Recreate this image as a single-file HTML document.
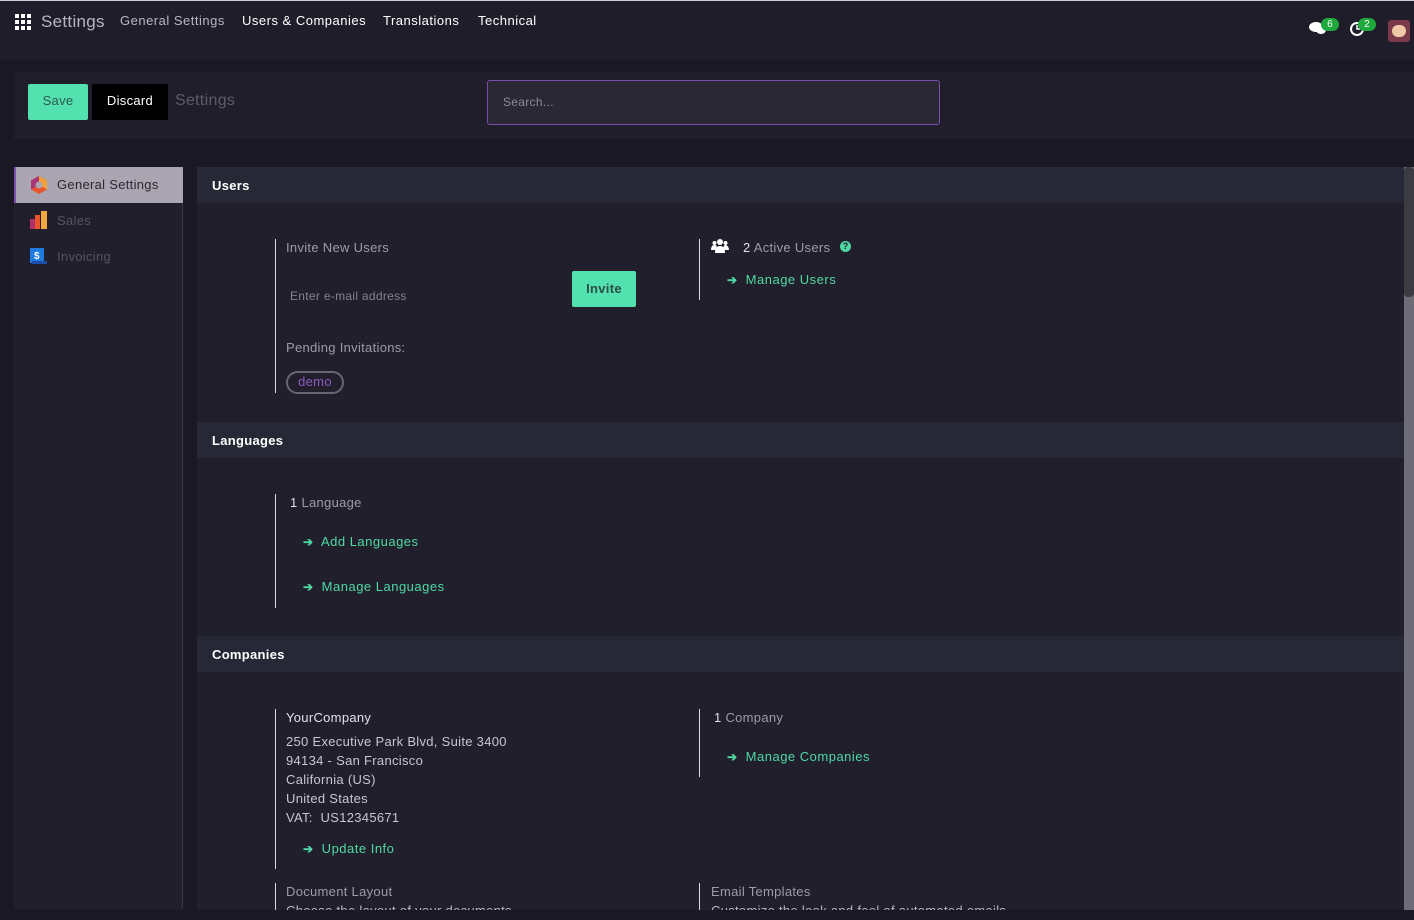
<!DOCTYPE html>
<html><head><meta charset="utf-8"><style>
*{margin:0;padding:0;box-sizing:border-box}
body{width:1414px;height:920px;overflow:hidden;background:#1a1822;font-family:"Liberation Sans",sans-serif;font-size:13px;color:#b8b6c0;position:relative;letter-spacing:0.3px}
.a{position:absolute;white-space:nowrap}
.top{left:0;top:0;width:1414px;height:60px;background:#1e1d29;border-top:1px solid #cfcfcf}
.nav{top:13px;font-size:13px;color:#fff;letter-spacing:0.5px}
.cp{left:14px;top:72px;width:1400px;height:67px;background:#1f1e2a}
.side{left:14px;top:167px;width:169px;height:743px;background:#201f2b;border-right:1px solid #3a3945;border-radius:0 0 4px 4px}
.main{left:197px;top:167px;width:1207px;height:743px;background:#201f2b;overflow:hidden}
.sh{position:absolute;left:0;width:1207px;height:36px;background:#262836;color:#fff;font-weight:bold;font-size:13px;padding:11px 15px}
.vl{position:absolute;width:1px;background:#d8d8d8}
.lk{color:#4fd8a4;font-size:13px;letter-spacing:0.5px}
.lk b{font-size:12px;margin-right:4px}
.g{color:#9d9ba6}
.w{color:#e2e0e8}
</style></head><body>
<div class="a top"></div>
<svg class="a" style="left:15px;top:14px" width="16" height="16"><g fill="#fff"><rect x="0" y="0" width="4" height="4"/><rect x="6" y="0" width="4" height="4"/><rect x="12" y="0" width="4" height="4"/><rect x="0" y="6" width="4" height="4"/><rect x="6" y="6" width="4" height="4"/><rect x="12" y="6" width="4" height="4"/><rect x="0" y="12" width="4" height="4"/><rect x="6" y="12" width="4" height="4"/><rect x="12" y="12" width="4" height="4"/></g></svg>
<div class="a" style="left:41px;top:12px;font-size:17px;color:#b8b6c0">Settings</div>
<div class="a nav" style="left:120px;color:#b8b6c0">General Settings</div>
<div class="a nav" style="left:242px">Users &amp; Companies</div>
<div class="a nav" style="left:383px">Translations</div>
<div class="a nav" style="left:478px">Technical</div>
<svg class="a" style="left:1309px;top:21px" width="18" height="14"><ellipse cx="7" cy="6" rx="7" ry="5" fill="#fff"/><ellipse cx="12" cy="9" rx="5" ry="4" fill="#fff"/></svg>
<div class="a" style="left:1321px;top:18px;width:18px;height:13px;border-radius:7px;background:#1fa83c;color:#fff;font-size:10px;text-align:center;line-height:13px">6</div>
<svg class="a" style="left:1349px;top:21px" width="16" height="16"><circle cx="8" cy="8" r="6" fill="none" stroke="#fff" stroke-width="2"/><path d="M8 4v4h3" stroke="#fff" stroke-width="1.5" fill="none"/></svg>
<div class="a" style="left:1358px;top:18px;width:18px;height:13px;border-radius:7px;background:#1fa83c;color:#fff;font-size:10px;text-align:center;line-height:13px">2</div>
<div class="a" style="left:1388px;top:20px;width:22px;height:22px;border-radius:3px;background:#7a3a4a"><div style="margin:5px 4px;width:14px;height:12px;background:#f1c9a8;border-radius:6px"></div></div>

<div class="a cp"></div>
<div class="a" style="left:28px;top:84px;width:60px;height:36px;background:#53e1b0;border-radius:2px;color:#2b5a4a;text-align:center;line-height:34px">Save</div>
<div class="a" style="left:92px;top:84px;width:76px;height:36px;background:#000;border-radius:2px;color:#fff;text-align:center;line-height:34px">Discard</div>
<div class="a" style="left:175px;top:92px;font-size:16px;color:#5f5c68">Settings</div>
<div class="a" style="left:487px;top:80px;width:453px;height:45px;background:#2a2835;border:1px solid #7b4fa8;border-radius:3px;color:#8d8a96;font-size:12px;padding:14px 15px">Search...</div>

<div class="a side"></div>
<div class="a" style="left:14px;top:167px;width:169px;height:36px;background:#aaa5b0;border-left:2px solid #7b4fa8"></div>
<svg class="a" style="left:29px;top:175px" width="20" height="20"><path d="M10 1l8 4.5v9L10 19 2 14.5v-9z" fill="#e8542e"/><path d="M10 1l8 4.5v9L10 10z" fill="#f2a03a"/><path d="M2 5.5L10 1v9L2 14.5z" fill="#a8357a"/><circle cx="10" cy="10" r="3.5" fill="#aaa5b0"/></svg>
<div class="a" style="left:57px;top:177px;color:#2a2833">General Settings</div>
<svg class="a" style="left:29px;top:211px" width="20" height="18"><rect x="1" y="8" width="5" height="10" fill="#b0306a"/><rect x="6" y="4" width="5" height="14" fill="#e8542e"/><rect x="12" y="0" width="6" height="18" fill="#f2a83a"/></svg>
<div class="a" style="left:57px;top:213px;color:#55535e">Sales</div>
<svg class="a" style="left:29px;top:247px" width="18" height="18"><rect x="1" y="1" width="14" height="15" fill="#1e7be0"/><rect x="3" y="14" width="15" height="3" fill="#1b4ea8"/><text x="5" y="12" font-size="10" font-weight="bold" fill="#fff" font-family="Liberation Sans">$</text></svg>
<div class="a" style="left:57px;top:249px;color:#55535e">Invoicing</div>

<div class="a main">
  <div class="sh" style="top:0">Users</div>
  <div class="vl" style="left:78px;top:72px;height:154px"></div>
  <div class="a g" style="left:89px;top:73px">Invite New Users</div>
  <div class="a" style="left:93px;top:122px;color:#85838e;font-size:12px">Enter e-mail address</div>
  <div class="a" style="left:375px;top:104px;width:64px;height:36px;background:#53e1b0;border-radius:2px;color:#2b4f48;text-align:center;line-height:35px;font-weight:bold">Invite</div>
  <div class="a g" style="left:89px;top:173px">Pending Invitations:</div>
  <div class="a" style="left:89px;top:204px;width:58px;height:23px;border:2px solid #6a6475;border-radius:12px;color:#8a5cc0;text-align:center;line-height:18px">demo</div>
  <div class="vl" style="left:502px;top:72px;height:61px"></div>
  <svg class="a" style="left:514px;top:71px" width="18" height="16"><g fill="#fff"><circle cx="9" cy="4" r="3"/><path d="M4 15c0-5 2-7 5-7s5 2 5 7z"/><circle cx="3.5" cy="5" r="2"/><circle cx="14.5" cy="5" r="2"/><path d="M0 12c0-3 1-5 3.5-5S6 9 6 12z"/><path d="M12 12c0-3 1-5 2.5-5S18 9 18 12z"/></g></svg>
  <div class="a" style="left:546px;top:73px"><span class="w">2</span> <span class="g">Active Users</span></div>
  <div class="a" style="left:643px;top:74px;width:11px;height:11px;border-radius:50%;background:#4fd8a4;color:#1e1d29;font-size:9px;font-weight:bold;text-align:center;line-height:11px;letter-spacing:0">?</div>
  <div class="a lk" style="left:530px;top:105px"><b>➔</b> Manage Users</div>

  <div class="sh" style="top:255px">Languages</div>
  <div class="vl" style="left:78px;top:327px;height:114px"></div>
  <div class="a" style="left:93px;top:328px"><span class="w">1</span> <span class="g">Language</span></div>
  <div class="a lk" style="left:106px;top:367px"><b>➔</b> Add Languages</div>
  <div class="a lk" style="left:106px;top:412px"><b>➔</b> Manage Languages</div>

  <div class="sh" style="top:469px">Companies</div>
  <div class="vl" style="left:78px;top:542px;height:160px"></div>
  <div class="a w" style="left:89px;top:543px">YourCompany</div>
  <div class="a" style="left:89px;top:565px;line-height:19px;color:#c8c6cf">250 Executive Park Blvd, Suite 3400<br>94134 - San Francisco<br>California (US)<br>United States<br>VAT:&nbsp; US12345671</div>
  <div class="a lk" style="left:106px;top:674px"><b>➔</b> Update Info</div>
  <div class="vl" style="left:502px;top:542px;height:68px"></div>
  <div class="a" style="left:517px;top:543px"><span class="w">1</span> <span class="g">Company</span></div>
  <div class="a lk" style="left:530px;top:582px"><b>➔</b> Manage Companies</div>
  <div class="vl" style="left:78px;top:716px;height:40px"></div>
  <div class="a g" style="left:89px;top:717px">Document Layout</div>
  <div class="a" style="left:89px;top:736px;color:#b8b6c0">Choose the layout of your documents</div>
  <div class="vl" style="left:502px;top:716px;height:40px"></div>
  <div class="a g" style="left:514px;top:717px">Email Templates</div>
  <div class="a" style="left:514px;top:736px;color:#b8b6c0">Customize the look and feel of automated emails</div>
</div>
<div class="a" style="left:1404px;top:167px;width:10px;height:743px;background:#6e6c76"></div>
<div class="a" style="left:1404px;top:167px;width:10px;height:130px;background:#3c3b42;border-radius:4px"></div>
<div class="a" style="left:0;top:910px;width:1414px;height:10px;background:#1a1822"></div>
</body></html>
